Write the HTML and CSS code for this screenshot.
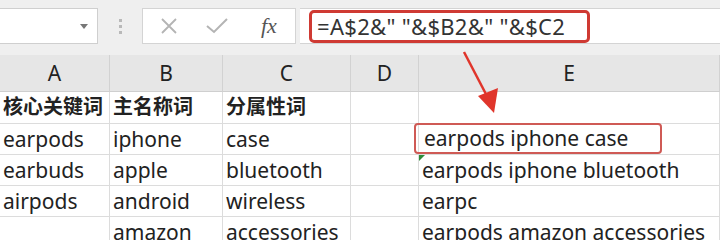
FILE: index.html
```html
<!DOCTYPE html>
<html lang="zh-CN">
<head>
    <meta charset="UTF-8">
    <title>拼接关键词</title>
    <link rel="stylesheet" href="styles.css">
</head>
<body>

<div class="toolbar">
    <div class="name-box">
        <span class="caret"></span>
    </div>
    <div class="grip">
        <span></span><span></span><span></span>
    </div>
    <div class="fx-box">
        <svg class="fx-icon cancel" width="18" height="18" viewBox="0 0 18 18">
            <path d="M2 2 L16 16 M16 2 L2 16" stroke="#b4b4b4" stroke-width="1.8" fill="none"/>
        </svg>
        <svg class="fx-icon ok" width="22" height="16" viewBox="0 0 22 16">
            <path d="M1 8 L8 14 L21 1" stroke="#b4b4b4" stroke-width="2" fill="none"/>
        </svg>
        <span class="fx-label">fx</span>
    </div>
    <div class="formula">
        <span class="formula-text">=A$2&amp;" "&amp;$B2&amp;" "&amp;$C2</span>
    </div>
</div>

<div class="sheet">
    <div class="col-head">A</div>
    <div class="col-head">B</div>
    <div class="col-head">C</div>
    <div class="col-head">D</div>
    <div class="col-head">E</div>

    <div class="cell bold">核心关键词</div>
    <div class="cell bold">主名称词</div>
    <div class="cell bold">分属性词</div>
    <div class="cell"></div>
    <div class="cell"></div>

    <div class="cell">earpods</div>
    <div class="cell">iphone</div>
    <div class="cell">case</div>
    <div class="cell"></div>
    <div class="cell"><span class="result">earpods iphone case</span></div>

    <div class="cell">earbuds</div>
    <div class="cell">apple</div>
    <div class="cell">bluetooth</div>
    <div class="cell"></div>
    <div class="cell flagged">earpods iphone bluetooth</div>

    <div class="cell">airpods</div>
    <div class="cell">android</div>
    <div class="cell">wireless</div>
    <div class="cell"></div>
    <div class="cell">earpc</div>

    <div class="cell"></div>
    <div class="cell">amazon</div>
    <div class="cell">accessories</div>
    <div class="cell"></div>
    <div class="cell">earpods amazon accessories</div>
</div>

<!-- arrow pointing from the formula to the result -->
<svg class="arrow" width="60" height="80" viewBox="0 0 60 80">
    <line x1="8" y1="6" x2="32" y2="52" stroke="#e0352b" stroke-width="2.5"/>
    <polygon points="22,50 42,42 38,67" fill="#e0352b"/>
</svg>

</body>
</html>
```

FILE: styles.css
```css
body {
    margin: 0;
    width: 720px;
    height: 240px;
    overflow: hidden;
    background-color: #fff;
    font-family: "Noto Sans", "Noto Sans CJK SC", sans-serif;
    color: #222;
    position: relative;
}
.toolbar {
    display: flex;
    align-items: center;
    height: 55px;
    padding-bottom: 3px;
    box-sizing: border-box;
    background-color: #efefef;
}
.name-box {
    width: 98px;
    height: 36px;
    box-sizing: border-box;
    background-color: #fff;
    border: 1px solid #cfcfcf;
    border-left: none;
    display: flex;
    align-items: center;
    justify-content: flex-end;
    padding-right: 9px;
}
.caret {
    width: 0;
    height: 0;
    border-left: 4px solid transparent;
    border-right: 4px solid transparent;
    border-top: 5px solid #777;
}
.grip {
    width: 44px;
    display: flex;
    flex-direction: column;
    align-items: center;
    gap: 3px;
}
.grip span {
    width: 3px;
    height: 3px;
    background-color: #b9b9b9;
}
.fx-box {
    width: 154px;
    height: 36px;
    box-sizing: border-box;
    background-color: #fff;
    border: 1px solid #d4d4d4;
    display: flex;
    align-items: center;
}
.cancel {
    margin-left: 17px;
}
.ok {
    margin-left: 28px;
}
.fx-label {
    margin-left: 33px;
    font-family: "Liberation Serif", serif;
    font-style: italic;
    font-size: 22px;
    color: #555;
}
.formula {
    flex: 1;
    height: 36px;
    margin-left: 4px;
    box-sizing: border-box;
    background-color: #fff;
    border-top: 1px solid #d4d4d4;
    border-bottom: 1px solid #d4d4d4;
    display: flex;
    align-items: center;
}
.formula-text {
    margin-left: 9px;
    height: 33px;
    width: 281px;
    box-sizing: border-box;
    border: 3px solid #cf3a33;
    border-radius: 5px;
    padding-left: 5px;
    font-size: 22px;
    letter-spacing: 0.3px;
    line-height: 27px;
    color: #333;
}
.sheet {
    display: grid;
    grid-template-columns: 110px 113px 128px 68px 301px;
    grid-template-rows: 37px 32px 31px 31px 31px 31px;
}
.col-head {
    background-color: #e6e6e6;
    border-right: 1px solid #d2d2d2;
    border-bottom: 1px solid #cfcfcf;
    box-sizing: border-box;
    text-align: center;
    font-size: 21px;
    line-height: 36px;
    color: #222;
}
.cell {
    border-right: 1px solid #dcdcdc;
    border-bottom: 1px solid #dcdcdc;
    box-sizing: border-box;
    padding-left: 3px;
    font-size: 21px;
    line-height: 30px;
    white-space: nowrap;
    position: relative;
}
.bold {
    font-size: 20px;
    font-weight: bold;
}
.result {
    display: block;
    margin: -1px 0 0 -8px;
    width: 248px;
    height: 31px;
    box-sizing: border-box;
    border: 2px solid #cf5a55;
    border-radius: 4px;
    padding-left: 8px;
    line-height: 27px;
}
.flagged::before {
    content: "";
    position: absolute;
    left: 0;
    top: 0;
    border-top: 6px solid #2e8b3a;
    border-right: 6px solid transparent;
}
.arrow {
    position: absolute;
    left: 456px;
    top: 46px;
}
```
